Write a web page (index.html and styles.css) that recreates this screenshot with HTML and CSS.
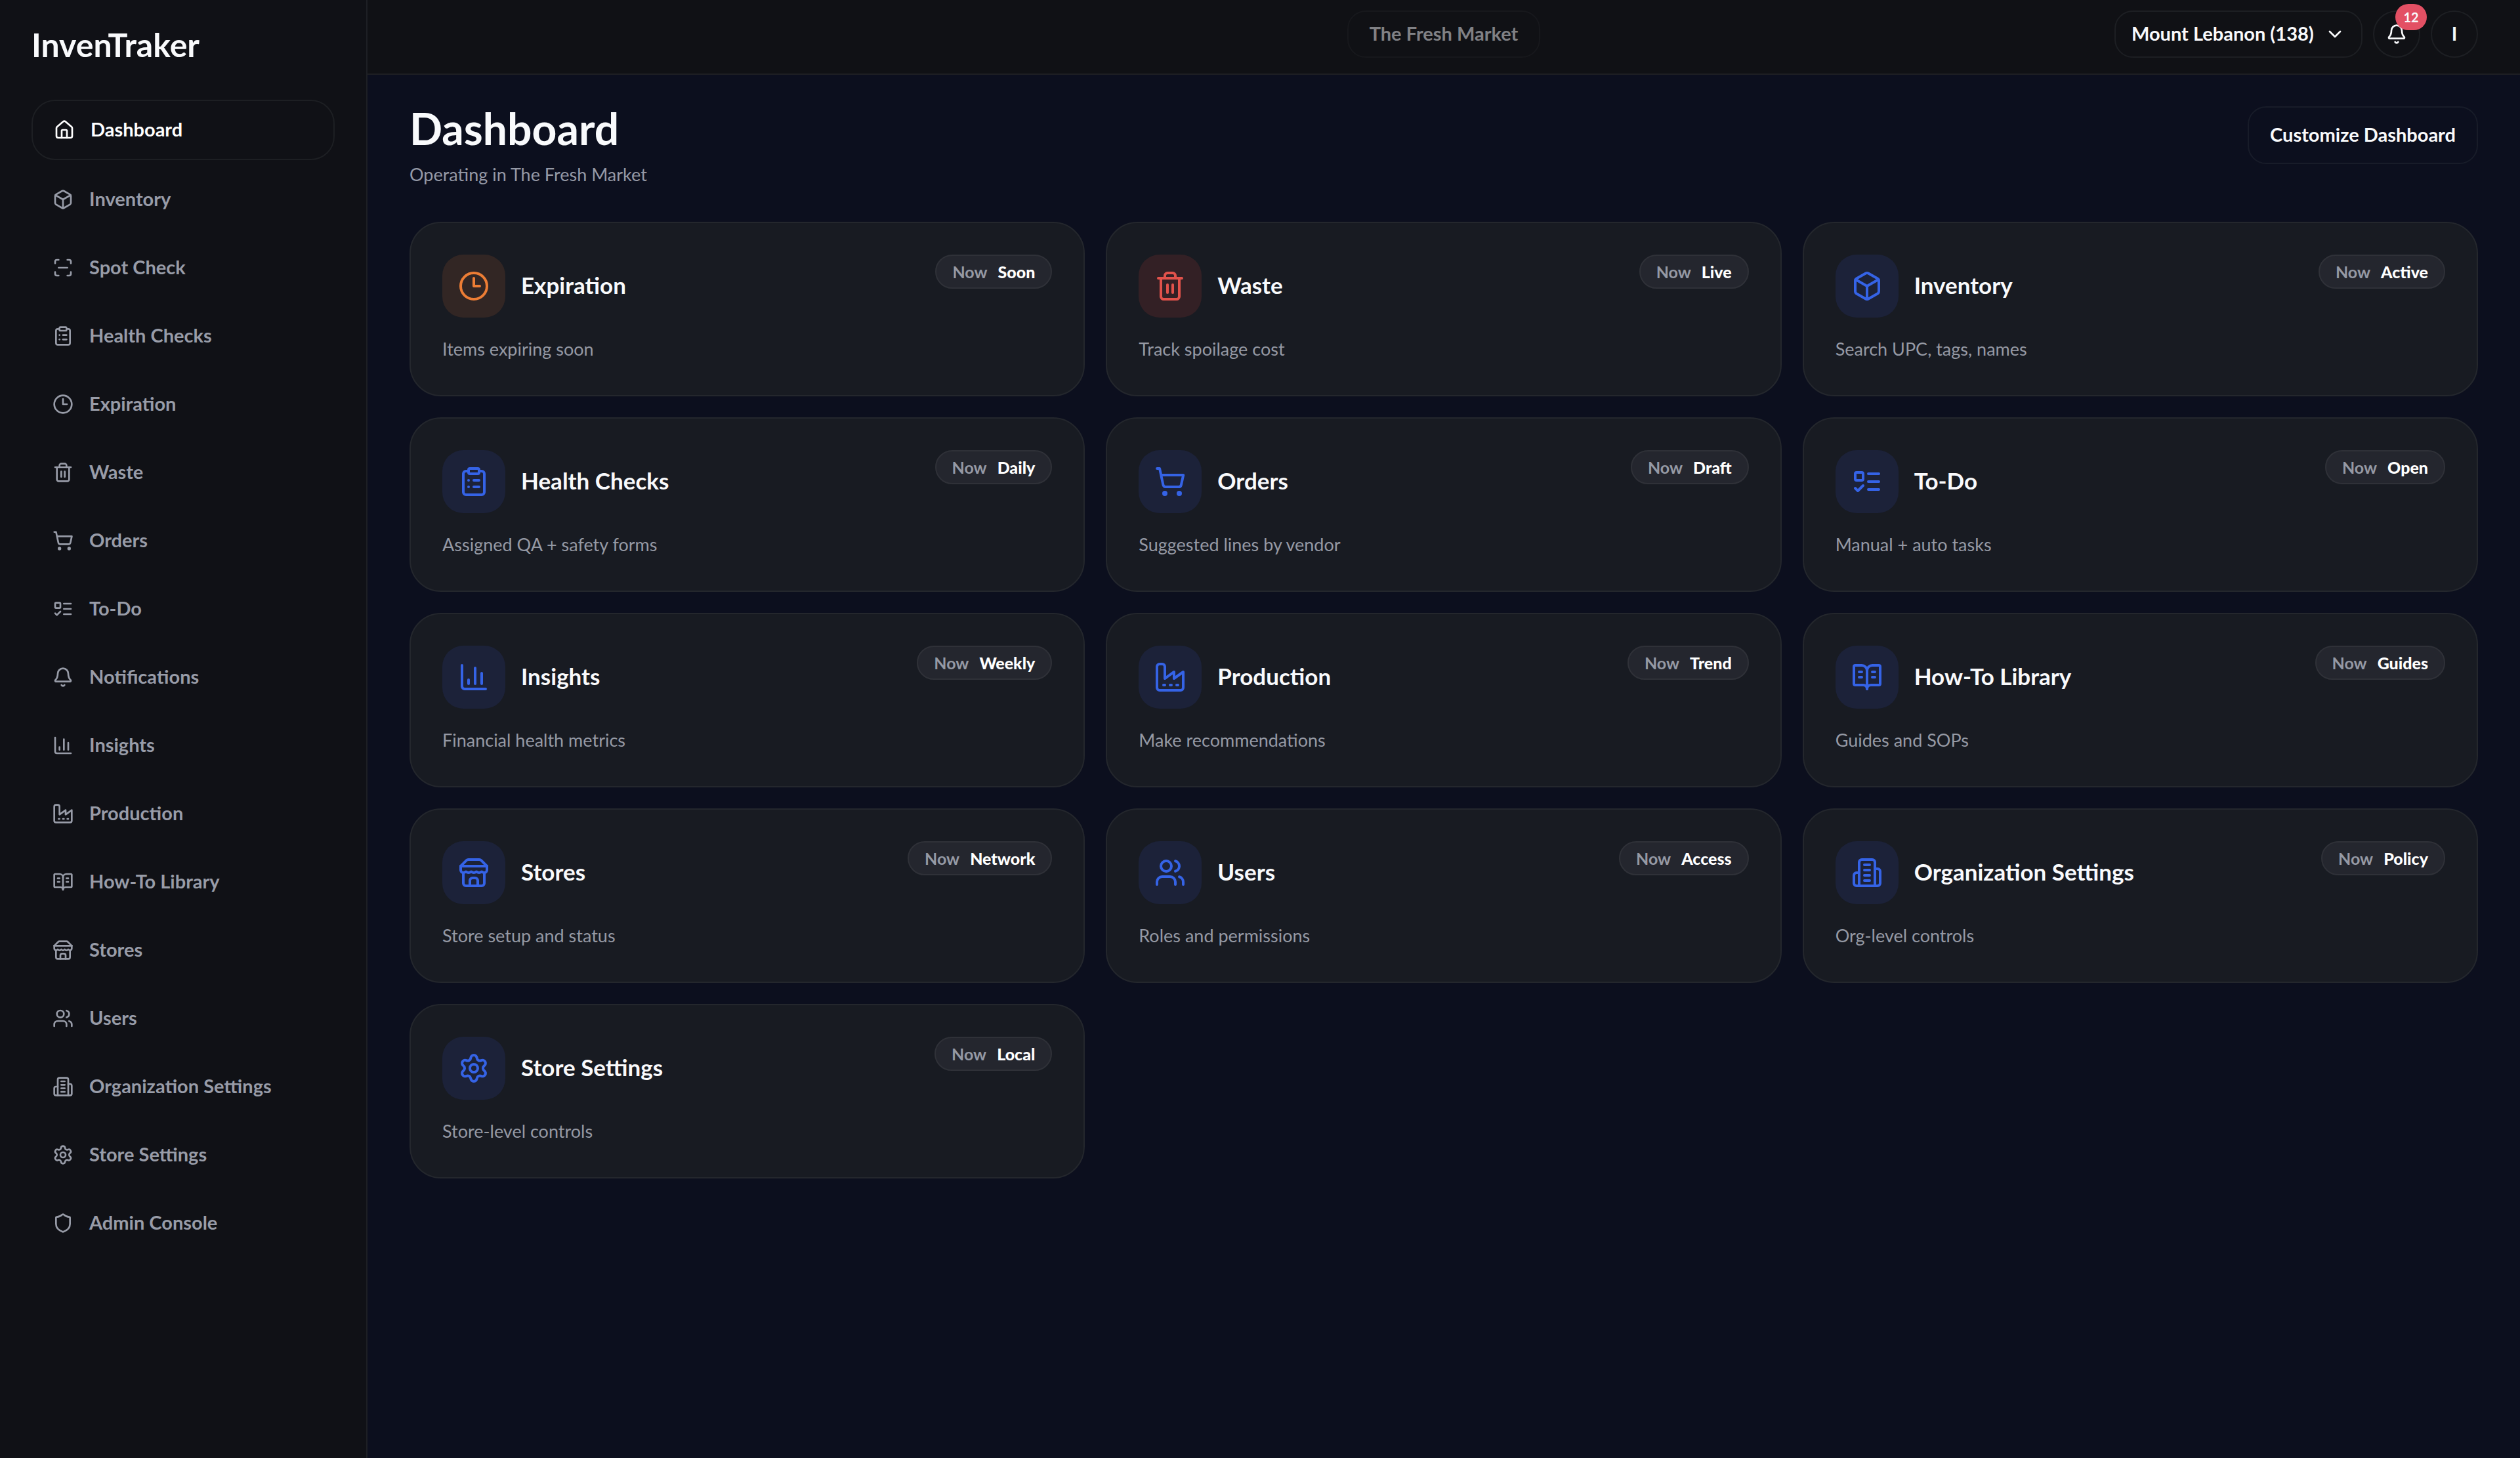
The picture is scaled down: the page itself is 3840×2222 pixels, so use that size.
FILE: index.html
```html
<!DOCTYPE html>
<html lang="en">
<head>
    <meta charset="UTF-8">
    <meta name="viewport" content="width=device-width, initial-scale=1.0">
    <title>InvenTraker - Dashboard</title>
    <link rel="stylesheet" href="styles.css">
</head>
<body>
    <!-- icon sprite -->
    <svg class="sprite" aria-hidden="true">
        <symbol id="home" viewBox="0 0 24 24"><path d="M15 21v-8a1 1 0 0 0-1-1h-4a1 1 0 0 0-1 1v8"/><path d="M3 10a2 2 0 0 1 .709-1.528l7-6a2 2 0 0 1 2.582 0l7 6A2 2 0 0 1 21 10v9a2 2 0 0 1-2 2H5a2 2 0 0 1-2-2z"/></symbol>
        <symbol id="box" viewBox="0 0 24 24"><path d="M21 8a2 2 0 0 0-1-1.73l-7-4a2 2 0 0 0-2 0l-7 4A2 2 0 0 0 3 8v8a2 2 0 0 0 1 1.73l7 4a2 2 0 0 0 2 0l7-4A2 2 0 0 0 21 16Z"/><path d="m3.3 7 8.7 5 8.7-5"/><path d="M12 22V12"/></symbol>
        <symbol id="scan" viewBox="0 0 24 24"><path d="M3 7V5a2 2 0 0 1 2-2h2"/><path d="M17 3h2a2 2 0 0 1 2 2v2"/><path d="M21 17v2a2 2 0 0 1-2 2h-2"/><path d="M7 21H5a2 2 0 0 1-2-2v-2"/><path d="M7 12h10"/></symbol>
        <symbol id="clipboard" viewBox="0 0 24 24"><rect x="8" y="2" width="8" height="4" rx="1"/><path d="M16 4h2a2 2 0 0 1 2 2v14a2 2 0 0 1-2 2H6a2 2 0 0 1-2-2V6a2 2 0 0 1 2-2h2"/><path d="M12 11h4"/><path d="M12 16h4"/><path d="M8 11h.01"/><path d="M8 16h.01"/></symbol>
        <symbol id="clock" viewBox="0 0 24 24"><circle cx="12" cy="12" r="10"/><path d="M12 6v6h4.5"/></symbol>
        <symbol id="trash" viewBox="0 0 24 24"><path d="M3 6h18"/><path d="M19 6v14c0 1-1 2-2 2H7c-1 0-2-1-2-2V6"/><path d="M8 6V4c0-1 1-2 2-2h4c1 0 2 1 2 2v2"/><path d="M10 11v6"/><path d="M14 11v6"/></symbol>
        <symbol id="cart" viewBox="0 0 24 24"><circle cx="8" cy="21" r="1"/><circle cx="19" cy="21" r="1"/><path d="M2.05 2.05h2l2.66 12.42a2 2 0 0 0 2 1.58h9.78a2 2 0 0 0 1.95-1.57l1.65-7.43H5.12"/></symbol>
        <symbol id="todo" viewBox="0 0 24 24"><rect x="3" y="5" width="6" height="6" rx="1"/><path d="m3 17 2 2 4-4"/><path d="M13 6h8"/><path d="M13 12h8"/><path d="M13 18h8"/></symbol>
        <symbol id="bell" viewBox="0 0 24 24"><path d="M10.268 21a2 2 0 0 0 3.464 0"/><path d="M3.262 15.326A1 1 0 0 0 4 17h16a1 1 0 0 0 .74-1.673C19.41 13.956 18 12.499 18 8A6 6 0 0 0 6 8c0 4.499-1.411 5.956-2.738 7.326"/></symbol>
        <symbol id="chart" viewBox="0 0 24 24"><path d="M3 3v16a2 2 0 0 0 2 2h16"/><path d="M18 17V9"/><path d="M13 17V5"/><path d="M8 17v-3"/></symbol>
        <symbol id="factory" viewBox="0 0 24 24"><path d="M2 20a2 2 0 0 0 2 2h16a2 2 0 0 0 2-2V8l-7 5V8l-7 5V4a2 2 0 0 0-2-2H4a2 2 0 0 0-2 2Z"/><path d="M17 18h1"/><path d="M12 18h1"/><path d="M7 18h1"/></symbol>
        <symbol id="book" viewBox="0 0 24 24"><path d="M12 7v14"/><path d="M16 12h2"/><path d="M16 8h2"/><path d="M3 18a1 1 0 0 1-1-1V4a1 1 0 0 1 1-1h5a4 4 0 0 1 4 4 4 4 0 0 1 4-4h5a1 1 0 0 1 1 1v13a1 1 0 0 1-1 1h-6a3 3 0 0 0-3 3 3 3 0 0 0-3-3z"/><path d="M6 12h2"/><path d="M6 8h2"/></symbol>
        <symbol id="store" viewBox="0 0 24 24"><path d="m2 7 4.41-4.41A2 2 0 0 1 7.83 2h8.34a2 2 0 0 1 1.42.59L22 7"/><path d="M4 12v8a2 2 0 0 0 2 2h12a2 2 0 0 0 2-2v-8"/><path d="M15 22v-4a2 2 0 0 0-2-2h-2a2 2 0 0 0-2 2v4"/><path d="M2 7h20"/><path d="M22 7v3a2 2 0 0 1-2 2a2.7 2.7 0 0 1-1.59-.63.7.7 0 0 0-.82 0A2.7 2.7 0 0 1 16 12a2.7 2.7 0 0 1-1.59-.63.7.7 0 0 0-.82 0A2.7 2.7 0 0 1 12 12a2.7 2.7 0 0 1-1.59-.63.7.7 0 0 0-.82 0A2.7 2.7 0 0 1 8 12a2.7 2.7 0 0 1-1.59-.63.7.7 0 0 0-.82 0A2.7 2.7 0 0 1 4 12a2 2 0 0 1-2-2V7"/></symbol>
        <symbol id="users" viewBox="0 0 24 24"><path d="M16 21v-2a4 4 0 0 0-4-4H6a4 4 0 0 0-4 4v2"/><circle cx="9" cy="7" r="4"/><path d="M22 21v-2a4 4 0 0 0-3-3.87"/><path d="M16 3.13a4 4 0 0 1 0 7.75"/></symbol>
        <symbol id="building" viewBox="0 0 24 24"><path d="M6 22V4a2 2 0 0 1 2-2h8a2 2 0 0 1 2 2v18Z"/><path d="M6 12H4a2 2 0 0 0-2 2v6a2 2 0 0 0 2 2h2"/><path d="M18 9h2a2 2 0 0 1 2 2v9a2 2 0 0 1-2 2h-2"/><path d="M10 6h4"/><path d="M10 10h4"/><path d="M10 14h4"/><path d="M10 18h4"/></symbol>
        <symbol id="gear" viewBox="0 0 24 24"><path d="M9.671 4.136a2.34 2.34 0 0 1 4.659 0 2.34 2.34 0 0 0 3.319 1.915 2.34 2.34 0 0 1 2.33 4.033 2.34 2.34 0 0 0 0 3.831 2.34 2.34 0 0 1-2.33 4.033 2.34 2.34 0 0 0-3.319 1.915 2.34 2.34 0 0 1-4.659 0 2.34 2.34 0 0 0-3.32-1.915 2.34 2.34 0 0 1-2.33-4.033 2.34 2.34 0 0 0 0-3.831A2.34 2.34 0 0 1 6.35 6.051a2.34 2.34 0 0 0 3.319-1.915"/><circle cx="12" cy="12" r="3"/></symbol>
        <symbol id="shield" viewBox="0 0 24 24"><path d="M20 13c0 5-3.5 7.5-7.66 8.95a1 1 0 0 1-.67-.01C7.5 20.5 4 18 4 13V6a1 1 0 0 1 1-1c2 0 4.5-1.2 6.24-2.72a1.17 1.17 0 0 1 1.52 0C14.51 3.81 17 5 19 5a1 1 0 0 1 1 1z"/></symbol>
        <symbol id="chevron" viewBox="0 0 24 24"><path d="m6 9 6 6 6-6"/></symbol>
    </svg>

    <div class="app">
        <aside class="sidebar">
            <div class="logo">InvenTraker</div>
            <nav class="nav">
                <a href="#" class="nav-item active"><svg class="icon"><use href="#home"/></svg><span>Dashboard</span></a>
                <a href="#" class="nav-item"><svg class="icon"><use href="#box"/></svg><span>Inventory</span></a>
                <a href="#" class="nav-item"><svg class="icon"><use href="#scan"/></svg><span>Spot Check</span></a>
                <a href="#" class="nav-item"><svg class="icon"><use href="#clipboard"/></svg><span>Health Checks</span></a>
                <a href="#" class="nav-item"><svg class="icon"><use href="#clock"/></svg><span>Expiration</span></a>
                <a href="#" class="nav-item"><svg class="icon"><use href="#trash"/></svg><span>Waste</span></a>
                <a href="#" class="nav-item"><svg class="icon"><use href="#cart"/></svg><span>Orders</span></a>
                <a href="#" class="nav-item"><svg class="icon"><use href="#todo"/></svg><span>To-Do</span></a>
                <a href="#" class="nav-item"><svg class="icon"><use href="#bell"/></svg><span>Notifications</span></a>
                <a href="#" class="nav-item"><svg class="icon"><use href="#chart"/></svg><span>Insights</span></a>
                <a href="#" class="nav-item"><svg class="icon"><use href="#factory"/></svg><span>Production</span></a>
                <a href="#" class="nav-item"><svg class="icon"><use href="#book"/></svg><span>How-To Library</span></a>
                <a href="#" class="nav-item"><svg class="icon"><use href="#store"/></svg><span>Stores</span></a>
                <a href="#" class="nav-item"><svg class="icon"><use href="#users"/></svg><span>Users</span></a>
                <a href="#" class="nav-item"><svg class="icon"><use href="#building"/></svg><span>Organization Settings</span></a>
                <a href="#" class="nav-item"><svg class="icon"><use href="#gear"/></svg><span>Store Settings</span></a>
                <a href="#" class="nav-item"><svg class="icon"><use href="#shield"/></svg><span>Admin Console</span></a>
            </nav>
        </aside>

        <div class="content">
            <header class="topbar">
                <button type="button" class="pill org" disabled>The Fresh Market</button>
                <div class="actions">
                    <div class="pill store-picker">
                        <select aria-label="Store">
                            <option>Mount Lebanon (138)</option>
                        </select>
                        <svg class="icon"><use href="#chevron"/></svg>
                    </div>
                    <button type="button" class="round" aria-label="Notifications">
                        <svg class="icon"><use href="#bell"/></svg>
                        <span class="count">12</span>
                    </button>
                    <button type="button" class="round user">I</button>
                </div>
            </header>

            <main class="main">
                <div class="page-head">
                    <div>
                        <h1>Dashboard</h1>
                        <p class="subtitle">Operating in The Fresh Market</p>
                    </div>
                    <button type="button" class="customize">Customize Dashboard</button>
                </div>

                <div class="cards">
                    <a href="#" class="card">
                        <div class="card-head">
                            <span class="tile orange"><svg><use href="#clock"/></svg></span>
                            <h2>Expiration</h2>
                            <span class="badge">Now <b>Soon</b></span>
                        </div>
                        <p>Items expiring soon</p>
                    </a>
                    <a href="#" class="card">
                        <div class="card-head">
                            <span class="tile red"><svg><use href="#trash"/></svg></span>
                            <h2>Waste</h2>
                            <span class="badge">Now <b>Live</b></span>
                        </div>
                        <p>Track spoilage cost</p>
                    </a>
                    <a href="#" class="card">
                        <div class="card-head">
                            <span class="tile"><svg><use href="#box"/></svg></span>
                            <h2>Inventory</h2>
                            <span class="badge">Now <b>Active</b></span>
                        </div>
                        <p>Search UPC, tags, names</p>
                    </a>
                    <a href="#" class="card">
                        <div class="card-head">
                            <span class="tile"><svg><use href="#clipboard"/></svg></span>
                            <h2>Health Checks</h2>
                            <span class="badge">Now <b>Daily</b></span>
                        </div>
                        <p>Assigned QA + safety forms</p>
                    </a>
                    <a href="#" class="card">
                        <div class="card-head">
                            <span class="tile"><svg><use href="#cart"/></svg></span>
                            <h2>Orders</h2>
                            <span class="badge">Now <b>Draft</b></span>
                        </div>
                        <p>Suggested lines by vendor</p>
                    </a>
                    <a href="#" class="card">
                        <div class="card-head">
                            <span class="tile"><svg><use href="#todo"/></svg></span>
                            <h2>To-Do</h2>
                            <span class="badge">Now <b>Open</b></span>
                        </div>
                        <p>Manual + auto tasks</p>
                    </a>
                    <a href="#" class="card">
                        <div class="card-head">
                            <span class="tile"><svg><use href="#chart"/></svg></span>
                            <h2>Insights</h2>
                            <span class="badge">Now <b>Weekly</b></span>
                        </div>
                        <p>Financial health metrics</p>
                    </a>
                    <a href="#" class="card">
                        <div class="card-head">
                            <span class="tile"><svg><use href="#factory"/></svg></span>
                            <h2>Production</h2>
                            <span class="badge">Now <b>Trend</b></span>
                        </div>
                        <p>Make recommendations</p>
                    </a>
                    <a href="#" class="card">
                        <div class="card-head">
                            <span class="tile"><svg><use href="#book"/></svg></span>
                            <h2>How-To Library</h2>
                            <span class="badge">Now <b>Guides</b></span>
                        </div>
                        <p>Guides and SOPs</p>
                    </a>
                    <a href="#" class="card">
                        <div class="card-head">
                            <span class="tile"><svg><use href="#store"/></svg></span>
                            <h2>Stores</h2>
                            <span class="badge">Now <b>Network</b></span>
                        </div>
                        <p>Store setup and status</p>
                    </a>
                    <a href="#" class="card">
                        <div class="card-head">
                            <span class="tile"><svg><use href="#users"/></svg></span>
                            <h2>Users</h2>
                            <span class="badge">Now <b>Access</b></span>
                        </div>
                        <p>Roles and permissions</p>
                    </a>
                    <a href="#" class="card">
                        <div class="card-head">
                            <span class="tile"><svg><use href="#building"/></svg></span>
                            <h2>Organization Settings</h2>
                            <span class="badge">Now <b>Policy</b></span>
                        </div>
                        <p>Org-level controls</p>
                    </a>
                    <a href="#" class="card">
                        <div class="card-head">
                            <span class="tile"><svg><use href="#gear"/></svg></span>
                            <h2>Store Settings</h2>
                            <span class="badge">Now <b>Local</b></span>
                        </div>
                        <p>Store-level controls</p>
                    </a>
                </div>
            </main>
        </div>
    </div>
</body>
</html>
```
FILE: styles.css
```css
* {
    box-sizing: border-box;
}
body {
    margin: 0;
    background-color: #0c0f1e;
    color: #f9fafc;
    font-family: Lato, sans-serif;
    font-size: 29px;
}
h1, h2, p {
    margin: 0;
}
a {
    color: inherit;
    text-decoration: none;
}
button, select {
    font: inherit;
    font-weight: 700;
    color: inherit;
    background: none;
    cursor: pointer;
}
svg {
    fill: none;
    stroke: currentColor;
    stroke-width: 2;
    stroke-linecap: round;
    stroke-linejoin: round;
}
.sprite {
    display: none;
}
.icon {
    width: 32px;
    height: 32px;
    flex-shrink: 0;
}
.app {
    display: flex;
    min-height: 100vh;
}

/* sidebar */
.sidebar {
    width: 560px;
    flex-shrink: 0;
    padding: 36px 48px;
    background-color: #101116;
    border-right: 2px solid #1d1f24;
}
.logo {
    font-size: 50px;
    line-height: 64px;
    font-weight: 700;
}
.nav {
    display: flex;
    flex-direction: column;
    gap: 16px;
    margin-top: 52px;
}
.nav-item {
    display: flex;
    align-items: center;
    gap: 24px;
    height: 88px;
    padding: 0 32px;
    border-radius: 36px;
    color: #989ca8;
    font-weight: 700;
    white-space: nowrap;
}
.nav-item span {
    padding-bottom: 4px;
}
.nav-item.active {
    height: 92px;
    border: 2px solid #1d1f23;
    color: #fff;
}

/* top bar */
.content {
    flex: 1;
    min-width: 0;
}
.topbar {
    display: grid;
    grid-template-columns: 1fr auto 1fr;
    padding: 16px 64px 24px;
    background-color: #101115;
    border-bottom: 2px solid #1e1f23;
}
.pill {
    height: 72px;
    border: 2px solid #1d1f23;
    border-radius: 28px;
}
.org {
    grid-column: 2;
    padding: 0 32px 4px;
    border-color: #17181c;
    color: #808185;
    cursor: default;
}
.actions {
    display: flex;
    justify-content: flex-end;
    gap: 16px;
}
.store-picker {
    display: flex;
    align-items: center;
    gap: 16px;
    padding: 0 24px;
}
.store-picker select {
    appearance: none;
    padding: 0 0 4px;
    border: none;
}
.round {
    position: relative;
    display: flex;
    align-items: center;
    justify-content: center;
    width: 72px;
    height: 72px;
    padding: 0;
    border: 2px solid #1d1f23;
    border-radius: 50%;
}
.user {
    padding-bottom: 4px;
}
.count {
    position: absolute;
    top: -12px;
    right: -12px;
    min-width: 48px;
    padding: 0 12px;
    border-radius: 20px;
    background-color: #e35064;
    font-size: 20px;
    line-height: 40px;
}

/* page */
.main {
    padding: 48px 64px;
}
.page-head {
    display: flex;
    justify-content: space-between;
    align-items: flex-start;
    margin-bottom: 52px;
}
h1 {
    font-size: 66px;
    line-height: 68px;
    font-weight: 700;
}
.subtitle {
    margin-top: 16px;
    font-size: 27px;
    line-height: 40px;
    color: #9599a6;
}
.customize {
    height: 88px;
    padding: 0 32px 4px;
    border: 2px solid #181c29;
    border-radius: 28px;
}
.cards {
    display: grid;
    grid-template-columns: repeat(3, 1fr);
    gap: 32px;
}
.card {
    padding: 48px;
    background-color: #181b22;
    border: 2px solid #24272d;
    border-radius: 48px;
}
.card-head {
    display: flex;
    align-items: center;
    gap: 24px;
}
.card h2 {
    flex: 1;
    padding-bottom: 4px;
    font-size: 35px;
    font-weight: 700;
}
.card p {
    padding: 30px 0 4px;
    font-size: 27px;
    line-height: 36px;
    color: #9599a4;
}
.tile {
    display: flex;
    align-items: center;
    justify-content: center;
    width: 96px;
    height: 96px;
    border-radius: 32px;
    background-color: #1c2239;
    color: #3563e6;
}
.tile svg {
    width: 48px;
    height: 48px;
}
.tile.orange {
    background-color: #322624;
    color: #ec7d35;
}
.tile.red {
    background-color: #332025;
    color: #e1524b;
}
.badge {
    display: flex;
    align-self: flex-start;
    gap: 16px;
    padding: 0 24px;
    border: 2px solid #2f3138;
    border-radius: 26px;
    background-color: #24262e;
    color: #9599a4;
    font-size: 25px;
    line-height: 48px;
    font-weight: 700;
}
.badge b {
    color: #fff;
}
```
